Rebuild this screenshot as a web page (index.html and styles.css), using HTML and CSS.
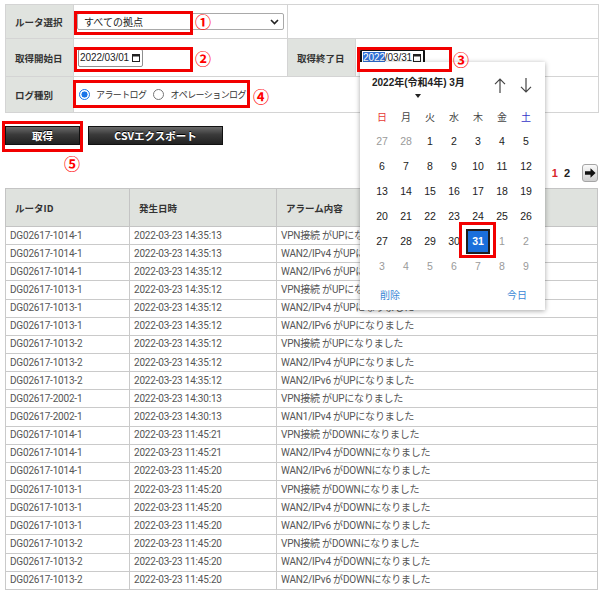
FILE: index.html
```html
<!DOCTYPE html>
<html lang="ja">
<head>
<meta charset="utf-8">
<title>アラームログ</title>
<link rel="stylesheet" href="styles.css">
</head>
<body>
<div class="page">
  <table class="form">
    <colgroup><col class="c-lab"><col class="c-val"><col class="c-lab"><col class="c-val2"></colgroup>
    <tr class="r1">
      <th>ルータ選択</th>
      <td><div class="select"><span>すべての拠点</span><svg width="9" height="6" viewBox="0 0 9 6"><path d="M1 1l3.5 3.5L8 1" fill="none" stroke="#222" stroke-width="1.6"/></svg></div></td>
      <td colspan="2"></td>
    </tr>
    <tr class="r2">
      <th>取得開始日</th>
      <td><div class="date"><span>2022/03/01</span><svg class="cal" width="8" height="8" viewBox="0 0 8 8"><rect x="0.5" y="0.5" width="7" height="7" fill="none" stroke="#222"/><rect x="0" y="0" width="8" height="2.5" fill="#222"/></svg></div></td>
      <th>取得終了日</th>
      <td><div class="date focus"><span><mark class="hl">2022</mark>/03/31</span><svg class="cal" width="8" height="8" viewBox="0 0 8 8"><rect x="0.5" y="0.5" width="7" height="7" fill="none" stroke="#222"/><rect x="0" y="0" width="8" height="2.5" fill="#222"/></svg></div></td>
    </tr>
    <tr class="r3">
      <th>ログ種別</th>
      <td colspan="3"><div class="radios"><label class="radio"><span class="dot on"></span>アラートログ</label><label class="radio"><span class="dot"></span>オペレーションログ</label></div></td>
    </tr>
  </table>

  <div class="actions">
    <button class="btn get">取得</button>
    <button class="btn csv">CSVエクスポート</button>
  </div>

  <div class="pager">
    <span class="pg cur">1</span>
    <span class="pg">2</span>
    <span class="next"><svg width="11" height="10" viewBox="0 0 11 10"><path d="M0 3.3h5.5V0.3L10.6 5 5.5 9.7V6.7H0z" fill="#111"/></svg></span>
  </div>

  <table class="log">
    <colgroup><col class="l1"><col class="l2"><col class="l3"></colgroup>
    <thead>
      <tr><th>ルータID</th><th>発生日時</th><th>アラーム内容</th></tr>
    </thead>
    <tbody>
      <tr><td>DG02617-1014-1</td><td>2022-03-23 14:35:13</td><td>VPN接続 がUPになりました</td></tr>
      <tr><td>DG02617-1014-1</td><td>2022-03-23 14:35:13</td><td>WAN2/IPv4 がUPになりました</td></tr>
      <tr><td>DG02617-1014-1</td><td>2022-03-23 14:35:12</td><td>WAN2/IPv6 がUPになりました</td></tr>
      <tr><td>DG02617-1013-1</td><td>2022-03-23 14:35:12</td><td>VPN接続 がUPになりました</td></tr>
      <tr><td>DG02617-1013-1</td><td>2022-03-23 14:35:12</td><td>WAN2/IPv4 がUPになりました</td></tr>
      <tr><td>DG02617-1013-1</td><td>2022-03-23 14:35:12</td><td>WAN2/IPv6 がUPになりました</td></tr>
      <tr><td>DG02617-1013-2</td><td>2022-03-23 14:35:12</td><td>VPN接続 がUPになりました</td></tr>
      <tr><td>DG02617-1013-2</td><td>2022-03-23 14:35:12</td><td>WAN2/IPv4 がUPになりました</td></tr>
      <tr><td>DG02617-1013-2</td><td>2022-03-23 14:35:12</td><td>WAN2/IPv6 がUPになりました</td></tr>
      <tr><td>DG02617-2002-1</td><td>2022-03-23 14:30:13</td><td>VPN接続 がUPになりました</td></tr>
      <tr><td>DG02617-2002-1</td><td>2022-03-23 14:30:13</td><td>WAN1/IPv4 がUPになりました</td></tr>
      <tr><td>DG02617-1014-1</td><td>2022-03-23 11:45:21</td><td>VPN接続 がDOWNになりました</td></tr>
      <tr><td>DG02617-1014-1</td><td>2022-03-23 11:45:21</td><td>WAN2/IPv4 がDOWNになりました</td></tr>
      <tr><td>DG02617-1014-1</td><td>2022-03-23 11:45:20</td><td>WAN2/IPv6 がDOWNになりました</td></tr>
      <tr><td>DG02617-1013-1</td><td>2022-03-23 11:45:20</td><td>VPN接続 がDOWNになりました</td></tr>
      <tr><td>DG02617-1013-1</td><td>2022-03-23 11:45:20</td><td>WAN2/IPv4 がDOWNになりました</td></tr>
      <tr><td>DG02617-1013-1</td><td>2022-03-23 11:45:20</td><td>WAN2/IPv6 がDOWNになりました</td></tr>
      <tr><td>DG02617-1013-2</td><td>2022-03-23 11:45:20</td><td>VPN接続 がDOWNになりました</td></tr>
      <tr><td>DG02617-1013-2</td><td>2022-03-23 11:45:20</td><td>WAN2/IPv4 がDOWNになりました</td></tr>
      <tr><td>DG02617-1013-2</td><td>2022-03-23 11:45:20</td><td>WAN2/IPv6 がDOWNになりました</td></tr>
    </tbody>
  </table>

  <div class="picker">
    <div class="pk-head">
      <div class="pk-title"><b>2022年(令和4年) 3月</b><span class="pk-caret"></span></div>
      <div class="pk-nav">
        <svg width="12" height="15" viewBox="0 0 12 15"><path d="M6 1.2V15M1 6.2L6 1.2 11 6.2" fill="none" stroke="#444" stroke-width="1.2"/></svg>
        <svg width="12" height="15" viewBox="0 0 12 15"><path d="M6 0V13.8M1 8.8L6 13.8 11 8.8" fill="none" stroke="#444" stroke-width="1.2"/></svg>
      </div>
    </div>
    <div class="pk-grid">
      <span class="wd sun">日</span><span class="wd">月</span><span class="wd">火</span><span class="wd">水</span><span class="wd">木</span><span class="wd">金</span><span class="wd sat">土</span>
      <span class="o">27</span><span class="o">28</span><span>1</span><span>2</span><span>3</span><span>4</span><span>5</span>
      <span>6</span><span>7</span><span>8</span><span>9</span><span>10</span><span>11</span><span>12</span>
      <span>13</span><span>14</span><span>15</span><span>16</span><span>17</span><span>18</span><span>19</span>
      <span>20</span><span>21</span><span>22</span><span>23</span><span>24</span><span>25</span><span>26</span>
      <span>27</span><span>28</span><span>29</span><span>30</span><span class="sel">31</span><span class="o">1</span><span class="o">2</span>
      <span class="o">3</span><span class="o">4</span><span class="o">5</span><span class="o">6</span><span class="o">7</span><span class="o">8</span><span class="o">9</span>
    </div>
    <div class="pk-foot"><span>削除</span><span>今日</span></div>
  </div>

  <div class="anno a1"></div>
  <div class="anno a2"></div>
  <div class="anno a3"></div>
  <div class="anno a4"></div>
  <div class="anno a5"></div>
  <div class="anno a31"></div>
  <span class="num n1">①</span>
  <span class="num n2">②</span>
  <span class="num n3">③</span>
  <span class="num n4">④</span>
  <span class="num n5">⑤</span>
</div>
</body>
</html>
```

FILE: styles.css
```css
* { box-sizing: border-box; }

body {
  margin: 0;
  background: #fff;
  font-family: Roboto, "Noto Sans CJK JP", sans-serif;
  color: #333;
}

.page {
  position: relative;
  width: 603px;
  height: 594px;
  padding: 4px 5px 0;
  overflow: hidden;
}

/* ---------- search form ---------- */
.form {
  width: 593px;
  border-collapse: collapse;
  table-layout: fixed;
}
.c-lab { width: 68px; }
.c-val { width: 214px; }
.c-val2 { width: 243px; }
.r1 { height: 34px; }
.r2 { height: 38px; }
.r3 { height: 36px; }

.form th,
.form td {
  border: 1px solid #d4d4d4;
  padding: 0 0 0 3px;
  vertical-align: middle;
}
.form th {
  background: #e0e3df;
  text-align: left;
  padding-left: 9px;
  font: bold 9.5px "Noto Sans CJK JP", sans-serif;
  color: #333;
  white-space: nowrap;
}

.select {
  width: 207px;
  height: 17px;
  border: 1px solid #a9a9a9;
  border-radius: 2px;
  background: #fff;
  display: flex;
  align-items: center;
  justify-content: space-between;
  padding: 0 4px 0 6px;
  font: 10px "Noto Sans CJK JP", sans-serif;
  color: #222;
}

.date {
  margin-left: 1px;
  width: 65px;
  height: 18px;
  border: 1px solid #8f8f8f;
  border-radius: 2px;
  background: #fff;
  display: flex;
  align-items: center;
  justify-content: space-between;
  padding: 0 2px 0 1px;
  font: 10px "Liberation Sans", sans-serif;
  letter-spacing: -0.1px;
  color: #222;
}
.date.focus {
  border: 2px solid #111;
  padding-left: 1px;
}
.hl {
  background: #2f6fd3;
  color: #fff;
}

.radios {
  display: flex;
  align-items: center;
  gap: 7px;
  padding-left: 2px;
  font: 9px "Noto Sans CJK JP", sans-serif;
  letter-spacing: -0.6px;
  color: #333;
}
.radio {
  display: flex;
  align-items: center;
  gap: 6px;
}
.dot {
  width: 11px;
  height: 11px;
  border-radius: 50%;
  border: 1px solid #767676;
  background: #fff;
}
.dot.on {
  border: 1.5px solid #1a73e8;
  background: radial-gradient(circle, #1a73e8 0 2.8px, #fff 3.3px);
}

/* ---------- buttons ---------- */
.actions {
  margin-top: 13px;
  display: flex;
  gap: 8px;
}
.btn {
  height: 19px;
  border: 1px solid #111;
  background: linear-gradient(#6a6a6a, #3a3a3a 45%, #222);
  color: #fff;
  font: bold 10.5px "Noto Sans CJK JP", sans-serif;
  text-shadow: 0 -1px 0 #000;
  padding: 0;
  line-height: 17px;
}
.get { width: 75px; }
.csv { width: 135px; }

/* ---------- pager ---------- */
.pager {
  margin-top: 19px;
  height: 18px;
  display: flex;
  justify-content: flex-end;
  align-items: center;
  gap: 6px;
  font: bold 11px "Liberation Sans", sans-serif;
  color: #222;
}
.pg.cur { color: #d8262b; }
.next {
  margin-left: 6px;
  width: 16px;
  height: 18px;
  border: 1px solid #a5a5a5;
  border-radius: 3px;
  background: linear-gradient(#fafafa, #cfcfcf);
  display: flex;
  align-items: center;
  justify-content: center;
}

/* ---------- log table ---------- */
.log {
  margin-top: 6px;
  width: 593px;
  border-collapse: collapse;
  table-layout: fixed;
  font-size: 10px;
  color: #555;
}
.l1 { width: 124px; }
.l2 { width: 147px; }
.log th {
  height: 38px;
  background: #dfe2de;
  text-align: left;
  padding-left: 9px;
  font: bold 9.5px "Noto Sans CJK JP", sans-serif;
  color: #333;
  border: 1px solid #c4c4c4;
}
.log td {
  height: 18.15px;
  padding: 0 0 0 4px;
  border: 1px solid #cacaca;
  white-space: nowrap;
  overflow: hidden;
  line-height: 1;
  letter-spacing: -0.2px;
}

/* ---------- date picker popup ---------- */
.picker {
  position: absolute;
  left: 360px;
  top: 62px;
  width: 185px;
  height: 248px;
  background: #fff;
  box-shadow: 0 1px 5px rgba(0, 0, 0, 0.35);
  font-family: "Liberation Sans", "Noto Sans CJK JP", sans-serif;
  display: flex;
  flex-direction: column;
}
.pk-head {
  height: 41.5px;
  flex: none;
  padding: 13px 13px 0 12px;
  display: flex;
  justify-content: space-between;
  align-items: flex-start;
}
.pk-title {
  display: flex;
  flex-direction: column;
  align-items: center;
}
.pk-title b {
  font-size: 10px;
  line-height: 16px;
  color: #222;
  white-space: nowrap;
}
.pk-caret {
  width: 0;
  height: 0;
  border-left: 3px solid transparent;
  border-right: 3px solid transparent;
  border-top: 4px solid #222;
  margin-top: 3px;
}
.pk-nav {
  display: flex;
  gap: 14px;
  padding-top: 3px;
}
.pk-grid {
  display: grid;
  grid-template-columns: repeat(7, 24px);
  grid-auto-rows: 25px;
  margin-left: 10px;
  font-size: 10.5px;
}
.pk-grid span {
  display: flex;
  align-items: center;
  justify-content: center;
  color: #222;
}
.pk-grid .wd { color: #444; font-size: 10px; }
.pk-grid .sun { color: #e53935; }
.pk-grid .sat { color: #3434c8; }
.pk-grid .o { color: #9a9a9a; }
.pk-grid .sel {
  background: #1a6fdb;
  border: 2px solid #1d1d1d;
  color: #fff;
  font-weight: bold;
}
.pk-foot {
  flex: 1;
  display: flex;
  justify-content: space-between;
  align-items: center;
  padding: 0 18px 0 20px;
  color: #3a87d6;
  font-size: 10px;
}

/* ---------- red annotations (overlay) ---------- */
.anno {
  position: absolute;
  border: 3px solid #f20000;
}
.a1 { left: 74px; top: 11px; width: 119px; height: 24px; }
.a2 { left: 74px; top: 47px; width: 119px; height: 25px; }
.a3 { left: 357px; top: 47px; width: 95px; height: 25px; }
.a4 { left: 73px; top: 80px; width: 177px; height: 28px; }
.a5 { left: 2px; top: 121px; width: 81px; height: 31px; }
.a31 { left: 459px; top: 222px; width: 37px; height: 36px; }

.num {
  position: absolute;
  color: #f00;
  font: bold 16px/1 "Noto Sans CJK JP", sans-serif;
}
.n1 { left: 195px; top: 13px; }
.n2 { left: 195px; top: 50px; }
.n3 { left: 453px; top: 51px; }
.n4 { left: 253px; top: 88px; }
.n5 { left: 64px; top: 155px; }
```
